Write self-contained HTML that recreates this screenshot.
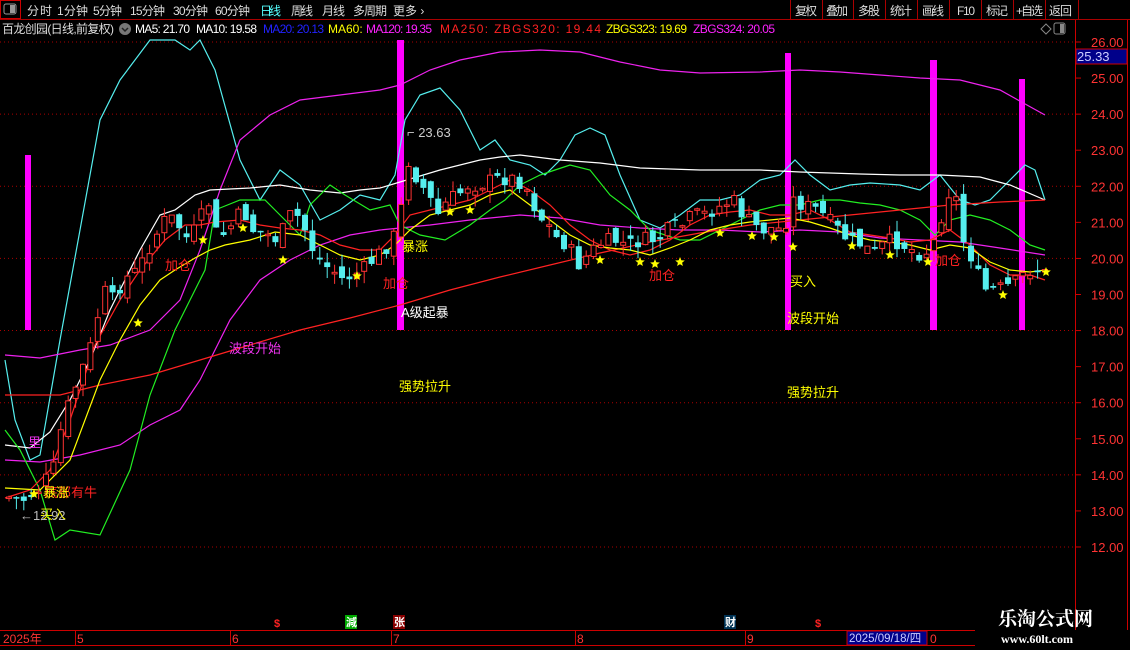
<!DOCTYPE html>
<html><head><meta charset="utf-8">
<style>
html,body{margin:0;padding:0;background:#000;width:1130px;height:650px;overflow:hidden;font-family:"Liberation Sans","Noto Sans CJK SC",sans-serif;}
svg{display:block}
</style></head><body>
<svg id="s" width="1130" height="650" xmlns="http://www.w3.org/2000/svg" font-family="Liberation Sans, Noto Sans CJK SC, sans-serif">
<rect width="1130" height="650" fill="#000"/>
<line x1="0" y1="19.5" x2="1130" y2="19.5" stroke="#a00" />
<rect x="0.5" y="0.5" width="20" height="18" fill="none" stroke="#c00"/>
<rect x="4" y="4" width="12" height="10" rx="2" fill="none" stroke="#999"/>
<rect x="10" y="5" width="5" height="8" fill="#999"/>
<g font-size="12" fill="#ddd">
<text x="27" y="15" textLength="25">分时</text><text x="57" y="15" textLength="31">1分钟</text><text x="93" y="15" textLength="29">5分钟</text>
<text x="130" y="15" textLength="35">15分钟</text><text x="173" y="15" textLength="35">30分钟</text><text x="215" y="15" textLength="35">60分钟</text>
<text x="260" y="15" fill="#5ff" textLength="21">日线</text><text x="291" y="15" textLength="22">周线</text><text x="322" y="15" textLength="23">月线</text>
<text x="353" y="15" textLength="34">多周期</text><text x="393" y="15">更多 ›</text>
</g>
<g stroke="#a00"><line x1="790.5" y1="0" x2="790.5" y2="19"/><line x1="822.5" y1="0" x2="822.5" y2="19"/><line x1="853.5" y1="0" x2="853.5" y2="19"/><line x1="885.5" y1="0" x2="885.5" y2="19"/><line x1="917.5" y1="0" x2="917.5" y2="19"/><line x1="949.5" y1="0" x2="949.5" y2="19"/><line x1="981.5" y1="0" x2="981.5" y2="19"/><line x1="1013.5" y1="0" x2="1013.5" y2="19"/><line x1="1045.5" y1="0" x2="1045.5" y2="19"/><line x1="1078.5" y1="0" x2="1078.5" y2="19"/></g>
<g font-size="12" fill="#ddd">
<text x="795" y="15" textLength="22">复权</text><text x="826" y="15" textLength="22">叠加</text><text x="858" y="15" textLength="22">多股</text><text x="890" y="15" textLength="22">统计</text>
<text x="922" y="15" textLength="22">画线</text><text x="957" y="15" textLength="18">F10</text><text x="986" y="15" textLength="22">标记</text><text x="1016" y="15" textLength="27">+自选</text><text x="1049" y="15" textLength="23">返回</text>
</g>
<g font-size="12">
<text x="2" y="33" fill="#ddd" textLength="112">百龙创园(日线,前复权)</text>
<circle cx="125" cy="29" r="6" fill="#777"/><path d="M122 28l3 3 3-3" stroke="#222" fill="none" stroke-width="1.5"/>
<text x="135" y="33" fill="#fff" textLength="55">MA5: 21.70</text><text x="196" y="33" fill="#fff" textLength="61">MA10: 19.58</text>
<text x="263" y="33" fill="#22f" textLength="61">MA20: 20.13</text><text x="328" y="33" fill="#ff0">MA60:</text>
<text x="366" y="33" fill="#f2f" textLength="66">MA120: 19.35</text><text x="440" y="33" fill="#f22" textLength="161">MA250: ZBGS320: 19.44</text>
<text x="606" y="33" fill="#ff0" textLength="81">ZBGS323: 19.69</text><text x="693" y="33" fill="#f2f" textLength="82">ZBGS324: 20.05</text>
</g>
<path d="M1046 24l5 5-5 5-5-5z" fill="none" stroke="#888"/>
<rect x="1054" y="23" width="11" height="11" rx="2" fill="none" stroke="#888"/><rect x="1060" y="24" width="4" height="9" fill="#888"/>
<line x1="1075.5" y1="20" x2="1075.5" y2="630" stroke="#c00"/>
<line x1="1127.5" y1="20" x2="1127.5" y2="630" stroke="#c00"/>
<g id="axis" font-size="13" fill="#f33"></g>
<rect x="1076" y="49" width="51" height="15" fill="#00008a" stroke="#c00"/>
<text x="1077" y="61" font-size="13" fill="#ccf">25.33</text>
<g id="grid"></g>
<g fill="#f0f">
<rect x="25" y="155" width="6" height="175"/><rect x="397" y="40" width="7" height="290"/>
<rect x="785" y="53" width="6" height="277"/><rect x="930" y="60" width="7" height="270"/>
<rect x="1019" y="79" width="6" height="251"/>
</g>
<g id="lines" fill="none" stroke-width="1.2"></g>
<g id="candles"></g>
<g id="stars" fill="#ff0"></g>
<g font-size="13">
<text x="229" y="353" fill="#e3e">波段开始</text>
<text x="399" y="391" fill="#ff0">强势拉升</text>
<text x="787" y="397" fill="#ff0">强势拉升</text>
<text x="401" y="317" fill="#fff">A级起暴</text>
<text x="787" y="323" fill="#ff0">波段开始</text>
<text x="790" y="286" fill="#ff0">买入</text>
<text x="402" y="251" fill="#ff0">暴涨</text>
<text x="383" y="288" fill="#f22">加仓</text>
<text x="165" y="270" fill="#f22">加仓</text>
<text x="649" y="280" fill="#f22">加仓</text>
<text x="935" y="265" fill="#f22">加仓</text>
<text x="45" y="497" fill="#f22">底部有牛</text>
<text x="43" y="497" fill="#ff0">暴涨</text>
<text x="40" y="519" fill="#ff0">买入</text>
<text x="20" y="520" fill="#bbb">←12.92</text>
<text x="28" y="447" fill="#e3e">里</text>
<text x="407" y="137" fill="#ccc">⌐ 23.63</text>
</g>
<g font-size="11" font-weight="bold">
<rect x="345" y="615" width="12" height="14" fill="#0a0"/><text x="346" y="626" fill="#fff">減</text>
<rect x="393" y="615" width="12" height="14" fill="#800"/><text x="394" y="626" fill="#fff">张</text>
<rect x="724" y="615" width="12" height="14" fill="#035"/><text x="725" y="626" fill="#fff">财</text>
<text x="274" y="627" fill="#f22">$</text><text x="815" y="627" fill="#f22">$</text>
</g>
<line x1="0" y1="630.5" x2="975" y2="630.5" stroke="#c00"/>
<line x1="0" y1="645.5" x2="975" y2="645.5" stroke="#c00"/>
<g stroke="#c00"><line x1="75.5" y1="630" x2="75.5" y2="645"/><line x1="230.5" y1="630" x2="230.5" y2="645"/><line x1="391.5" y1="630" x2="391.5" y2="645"/><line x1="575.5" y1="630" x2="575.5" y2="645"/><line x1="745.5" y1="630" x2="745.5" y2="645"/></g>
<g font-size="12" fill="#f33">
<text x="3" y="643">2025年</text><text x="77" y="643">5</text><text x="232" y="643">6</text><text x="393" y="643">7</text><text x="577" y="643">8</text><text x="747" y="643">9</text>
<rect x="847" y="631" width="80" height="14" fill="#00008a" stroke="#c00"/><text x="849" y="642" fill="#ccf" font-size="11.5">2025/09/18/四</text>
<text x="930" y="643">0</text>
</g>
<text x="998" y="625" font-size="19" font-weight="bold" fill="#fff" font-family="Noto Serif CJK SC, serif">乐淘公式网</text>
<text x="1001" y="643" font-size="12" font-weight="bold" fill="#fff" font-family="Liberation Serif, serif">www.60lt.com</text>
</svg>
<script>
(function(){
var NS="http://www.w3.org/2000/svg";
function el(p,t,a){var e=document.createElementNS(NS,t);for(var k in a)e.setAttribute(k,a[k]);p.appendChild(e);return e;}
var ax=document.getElementById('axis'),gr=document.getElementById('grid');
for(var p=26;p>=12;p--){var y=42+(26-p)*36.07;el(ax,'line',{x1:1075,y1:y,x2:1081,y2:y,stroke:'#c00'});var t=el(ax,'text',{x:1091,y:y+5});t.textContent=p.toFixed(2);
if(p%2==0)el(gr,'line',{x1:0,y1:y,x2:1075,y2:y,stroke:'#a00','stroke-dasharray':'1 3'});}
function P(s){return s.replace(/\),\(/g,' ').replace(/[()]/g,'');}
var L=[
['#5ee','(5,360),(15,420),(30,460),(40,455),(60,340),(80,230),(100,120),(120,80),(150,40),(175,40),(190,50),(200,40),(215,70),(240,160),(260,200),(280,170),(300,185),(320,220),(340,210),(360,195),(380,200),(395,175),(405,120),(420,95),(440,88),(460,110),(480,150),(495,140),(510,160),(530,165),(545,175),(560,160),(575,135),(590,128),(605,135),(620,175),(640,220),(660,228),(680,215),(700,200),(720,200),(740,195),(760,180),(780,175),(795,160),(810,175),(830,190),(850,185),(870,183),(900,185),(920,190),(940,175),(960,200),(975,205),(990,200),(1010,180),(1025,165),(1035,170),(1045,200)'],
['#e2e','(5,355),(40,358),(80,350),(110,345),(150,330),(180,300),(200,250),(220,190),(240,140),(270,115),(300,100),(340,95),(380,90),(400,85),(430,70),(460,60),(500,52),(540,50),(580,52),(620,62),(660,70),(700,73),(760,72),(800,70),(840,72),(880,75),(920,78),(960,80),(1000,90),(1045,115)'],
['#e2e','(5,460),(40,462),(80,455),(120,445),(150,425),(180,410),(200,380),(230,320),(260,280),(290,260),(320,245),(350,235),(380,230),(400,228),(430,225),(470,220),(520,215),(560,218),(600,225),(640,228),(680,230),(720,230),(760,232),(800,230),(840,232),(880,238),(920,240),(960,242),(1000,248),(1045,255)'],
['#fff','(5,445),(30,448),(50,432),(70,400),(90,360),(110,310),(140,250),(160,215),(175,210),(195,195),(210,190),(250,188),(280,185),(310,190),(340,193),(360,190),(380,188),(400,182),(440,170),(480,160),(500,157),(520,155),(560,160),(600,163),(640,168),(700,170),(760,170),(800,172),(860,174),(900,175),(940,175),(980,177),(1010,185),(1045,200)'],
['#2e2','(5,430),(20,450),(40,490),(55,540),(70,530),(100,535),(130,470),(150,395),(175,330),(195,290),(205,270),(215,210),(240,200),(265,200),(280,215),(300,235),(310,205),(330,185),(345,195),(370,210),(390,205),(400,225),(420,235),(445,240),(470,225),(490,210),(505,200),(520,185),(540,175),(555,170),(570,165),(590,170),(610,195),(630,210),(650,230),(680,240),(700,240),(720,230),(740,220),(760,210),(780,205),(800,205),(820,200),(840,200),(860,203),(880,205),(900,210),(920,220),(935,235),(950,220),(970,215),(990,220),(1010,230),(1030,245),(1045,250)'],
['#f22','(5,395),(60,395),(100,385),(150,375),(200,360),(250,345),(300,330),(350,318),(400,305),(450,290),(500,277),(550,265),(600,253),(650,242),(700,233),(750,225),(800,220),(850,215),(900,210),(950,205),(1000,202),(1045,200)'],
['#f22','(5,498),(30,490),(50,470),(70,420),(95,345),(120,300),(140,270),(165,240),(185,225),(200,225),(215,222),(240,220),(260,225),(280,228),(300,230),(320,235),(340,245),(360,250),(380,250),(395,235),(410,215),(430,210),(450,205),(470,200),(490,190),(510,180),(530,190),(550,205),(570,225),(590,240),(610,250),(630,255),(650,250),(670,240),(690,225),(710,215),(730,212),(750,210),(770,215),(790,215),(810,210),(830,220),(850,232),(870,235),(890,238),(910,242),(930,240),(950,230),(970,245),(990,265),(1010,275),(1030,275),(1045,280)'],
['#ff0','(5,488),(40,490),(70,460),(100,380),(120,340),(140,305),(160,280),(175,270),(195,258),(210,250),(225,245),(250,240),(275,232),(300,235),(320,245),(340,255),(360,260),(380,255),(395,245),(410,230),(430,215),(450,210),(470,205),(490,195),(510,190),(530,205),(550,220),(570,235),(590,245),(610,248),(630,250),(650,255),(670,248),(690,240),(710,230),(730,225),(750,222),(770,220),(790,218),(810,222),(830,228),(850,235),(870,240),(890,242),(910,245),(930,250),(950,245),(970,248),(990,262),(1010,270),(1030,272),(1045,270)']
];
var lg=document.getElementById('lines');
L.forEach(function(l){el(lg,'polyline',{points:P(l[1]),stroke:l[0]});});
var K=[[5,497],[20,500],[35,490],[50,470],[60,420],[75,380],[90,340],[100,290],[110,300],[120,280],[135,270],[150,240],[165,215],[175,225],[185,240],[195,225],[205,200],[215,240],[225,230],[240,210],[250,230],[265,235],[275,240],[290,210],[300,225],[310,250],[320,265],[330,270],[340,280],[350,275],[360,270],[370,260],[385,245],[395,230],[405,160],[415,180],[425,195],[435,215],[445,200],[455,195],[465,185],[475,185],[490,180],[505,178],[515,180],[525,190],[535,215],[545,225],[555,240],[565,245],[575,265],[585,255],[595,245],[610,240],[625,245],[640,240],[655,240],[665,230],[680,225],[690,215],[700,215],[710,210],[720,205],[730,200],[740,215],[750,225],[760,230],[770,228],[780,230],[790,200],[800,205],[815,210],[830,225],[845,240],[860,245],[870,255],[880,245],[890,240],[900,245],[910,250],[920,255],[930,245],[940,210],[950,180],[960,240],[970,260],[980,290],[990,290],[1000,288],[1010,285],[1020,275],[1030,268],[1045,275]];
function at(x){for(var i=0;i<K.length-1;i++){if(x<=K[i+1][0]){var a=K[i],b=K[i+1];return a[1]+(b[1]-a[1])*(x-a[0])/(b[0]-a[0]);}}return K[K.length-1][1];}
var cg=document.getElementById('candles'),prev=at(5),seed=7;
function rnd(){seed=(seed*9301+49297)%233280;return seed/233280;}
for(var x=6;x<=1046;x+=7.4){
 var c=at(x)+(rnd()-0.5)*16;var o=prev+(rnd()-0.5)*14;
 var up=c<o;var tp=Math.min(o,c),bt=Math.max(o,c);if(bt-tp<1.5)bt=tp+1.5;
 var hi=tp-rnd()*12,lo=bt+rnd()*12;var col=up?'#f33':'#5ee';
 el(cg,'line',{x1:x+3,y1:hi,x2:x+3,y2:lo,stroke:col});
 if(up)el(cg,'rect',{x:x+0.5,y:tp,width:5,height:bt-tp,fill:'#000',stroke:col});
 else el(cg,'rect',{x:x,y:tp,width:6,height:bt-tp,fill:col});
 prev=c;}
var sg=document.getElementById('stars');
[[34,494],[138,323],[203,240],[243,228],[283,260],[357,276],[450,212],[470,210],[600,260],[640,262],[655,264],[680,262],[720,233],[752,236],[793,247],[852,246],[890,255],[928,262],[1003,295],[1046,272],[774,237]].forEach(function(s){
 var x=s[0],y=s[1],pts=[];for(var i=0;i<10;i++){var r=i%2?2.2:5,a=-Math.PI/2+i*Math.PI/5;pts.push((x+r*Math.cos(a)).toFixed(1)+','+(y+r*Math.sin(a)).toFixed(1));}
 el(sg,'polygon',{points:pts.join(' ')});});
})();
</script>
</body></html>
